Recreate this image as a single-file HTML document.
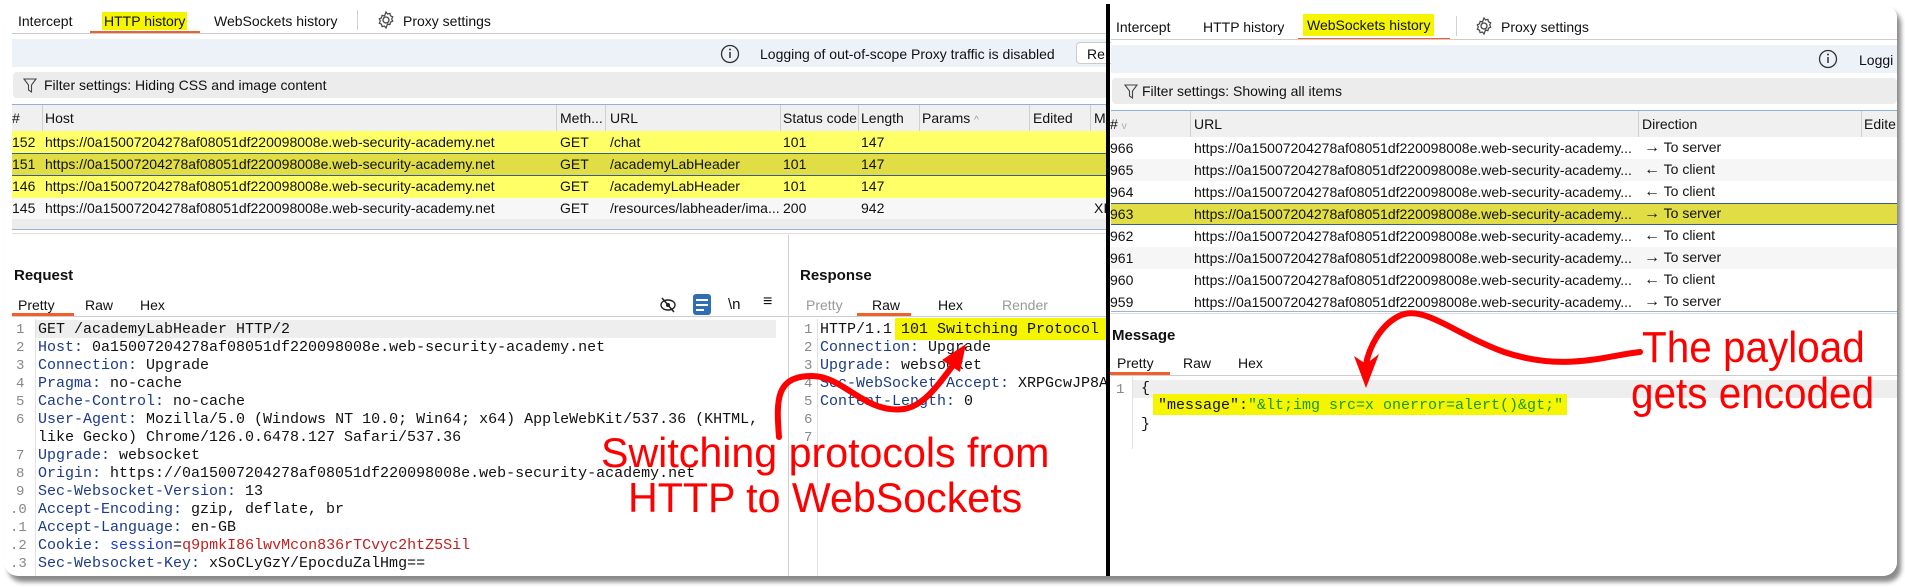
<!DOCTYPE html>
<html><head><meta charset="utf-8">
<style>
*{margin:0;padding:0;box-sizing:border-box}
body{width:1905px;height:587px;background:#fff;position:relative;overflow:hidden;font-family:"Liberation Sans",sans-serif;font-size:14px;color:#111}
.card{position:absolute;left:4px;top:4px;width:1893px;height:572px;background:#fff;border-radius:14px;box-shadow:4px 6px 5px #8a8a8a;overflow:hidden}
.a{position:absolute;white-space:nowrap}
.mono{font-family:"Liberation Mono",monospace;font-size:15px;letter-spacing:0}
.k{color:#1b3a8a}
.ln{color:#888;font-family:"Liberation Mono",monospace;font-size:14px}
.hl{background:#f5f500}
.sep{position:absolute;width:1px;background:#d0d0d0}
.red{color:#f00;font-family:"Liberation Sans",sans-serif;font-size:40px;line-height:40px;transform-origin:0 0}
.dir{font-size:16px}
</style></head><body>
<div class="card">
<div class="a" style="left:14px;top:9px">Intercept</div>
<div class="a hl" style="left:98px;top:8px;padding:1px 2px">HTTP history</div>
<div class="a" style="left:86px;top:27px;width:110px;height:3px;background:#f0602a"></div>
<div class="a" style="left:210px;top:9px">WebSockets history</div>
<div class="sep" style="left:353px;top:6px;height:20px"></div>
<svg class="a" style="left:372px;top:6px" width="20" height="20" viewBox="0 0 20 20"><circle cx="10" cy="10" r="3" fill="none" stroke="#444" stroke-width="1.3"/><path d="M10 2l1.5 2 2.4-.6.6 2.4 2.2 1-1 2.2 1 2.2-2.2 1-.6 2.4-2.4-.6L10 18l-1.5-2-2.4.6-.6-2.4-2.2-1 1-2.2-1-2.2 2.2-1 .6-2.4 2.4.6z" fill="none" stroke="#444" stroke-width="1.2"/></svg>
<div class="a" style="left:399px;top:9px">Proxy settings</div>
<div class="a" style="left:8px;top:29px;width:1096px;height:1px;background:#ccc"></div>

<div class="a" style="left:8px;top:35px;width:1096px;height:28px;background:#edf1f8"></div>
<svg class="a" style="left:716px;top:40px" width="20" height="20"><circle cx="10" cy="10" r="8.5" fill="none" stroke="#333" stroke-width="1.3"/><path d="M10 8v6" stroke="#333" stroke-width="1.5"/><circle cx="10" cy="5.5" r="1" fill="#333"/></svg>
<div class="a" style="left:756px;top:42px">Logging of out-of-scope Proxy traffic is disabled</div>
<div class="a" style="left:1072px;top:38px;width:40px;height:22px;background:#fff;border:1px solid #ccc;border-radius:4px;padding:3px 0 0 10px">Re</div>

<div class="a" style="left:9px;top:68px;width:1095px;height:26px;background:#ececec;border-radius:4px"></div>
<svg class="a" style="left:19px;top:74px" width="14" height="16"><path d="M1 1h12l-4.5 6v7l-3-2V7z" fill="none" stroke="#444" stroke-width="1.1"/></svg>
<div class="a" style="left:40px;top:73px">Filter settings: Hiding CSS and image content</div>

<div class="a" style="left:8px;top:100px;width:1096px;height:1px;background:#8fb0d8"></div>
<div class="a" style="left:8px;top:101px;width:1096px;height:26px;background:#f0f0f0"></div>
<div class="sep" style="left:38px;top:101px;height:26px"></div>
<div class="sep" style="left:552px;top:101px;height:26px"></div>
<div class="sep" style="left:601px;top:101px;height:26px"></div>
<div class="sep" style="left:776px;top:101px;height:26px"></div>
<div class="sep" style="left:854px;top:101px;height:26px"></div>
<div class="sep" style="left:915px;top:101px;height:26px"></div>
<div class="sep" style="left:1025px;top:101px;height:26px"></div>
<div class="sep" style="left:1086px;top:101px;height:26px"></div>
<div class="a" style="left:8px;top:106px">#</div>
<div class="a" style="left:41px;top:106px">Host</div>
<div class="a" style="left:556px;top:106px">Meth...</div>
<div class="a" style="left:606px;top:106px">URL</div>
<div class="a" style="left:779px;top:106px">Status code</div>
<div class="a" style="left:857px;top:106px">Length</div>
<div class="a" style="left:918px;top:106px">Params <span style="color:#999;font-size:10px">^</span></div>
<div class="a" style="left:1029px;top:106px">Edited</div>
<div class="a" style="left:1090px;top:106px">M</div>

<div class="a" style="left:8px;top:127px;width:1096px;height:22px;background:#ffff66"></div>
<div class="a" style="left:8px;top:149px;width:1096px;height:23px;background:#e0de44;border-top:1px solid #3a5a9a;border-bottom:1px solid #3a5a9a"></div>
<div class="a" style="left:8px;top:172px;width:1096px;height:22px;background:#ffff66"></div>
<div class="a" style="left:8px;top:194px;width:1096px;height:21px;background:#f7f7f7"></div>
<div class="a" style="left:8px;top:130px">152</div><div class="a" style="left:41px;top:130px">https://0a15007204278af08051df220098008e.web-security-academy.net</div><div class="a" style="left:556px;top:130px">GET</div><div class="a" style="left:606px;top:130px">/chat</div><div class="a" style="left:779px;top:130px">101</div><div class="a" style="left:857px;top:130px">147</div>
<div class="a" style="left:8px;top:152px">151</div><div class="a" style="left:41px;top:152px">https://0a15007204278af08051df220098008e.web-security-academy.net</div><div class="a" style="left:556px;top:152px">GET</div><div class="a" style="left:606px;top:152px">/academyLabHeader</div><div class="a" style="left:779px;top:152px">101</div><div class="a" style="left:857px;top:152px">147</div>
<div class="a" style="left:8px;top:174px">146</div><div class="a" style="left:41px;top:174px">https://0a15007204278af08051df220098008e.web-security-academy.net</div><div class="a" style="left:556px;top:174px">GET</div><div class="a" style="left:606px;top:174px">/academyLabHeader</div><div class="a" style="left:779px;top:174px">101</div><div class="a" style="left:857px;top:174px">147</div>
<div class="a" style="left:8px;top:196px">145</div><div class="a" style="left:41px;top:196px">https://0a15007204278af08051df220098008e.web-security-academy.net</div><div class="a" style="left:556px;top:196px">GET</div><div class="a" style="left:606px;top:196px">/resources/labheader/ima...</div><div class="a" style="left:779px;top:196px">200</div><div class="a" style="left:857px;top:196px">942</div><div class="a" style="left:1090px;top:196px">XI</div>
<div class="a" style="left:8px;top:215px;width:1096px;height:10px;background:#ececec"></div>
<div class="a" style="left:8px;top:225px;width:1096px;height:1px;background:#9ab4d6"></div>
<div class="a" style="left:8px;top:229px;width:1096px;height:1px;background:#ddd"></div>

<div class="sep" style="left:784px;top:231px;height:342px"></div>
<div class="a" style="left:10px;top:263px;font-weight:bold;font-size:15px">Request</div>
<div class="a" style="left:14px;top:293px">Pretty</div>
<div class="a" style="left:81px;top:293px">Raw</div>
<div class="a" style="left:136px;top:293px">Hex</div>
<div class="a" style="left:8px;top:309px;width:62px;height:3px;background:#f0602a"></div>
<svg class="a" style="left:654px;top:292px" width="20" height="18"><ellipse cx="10" cy="9" rx="7" ry="5" fill="none" stroke="#222" stroke-width="1.4"/><circle cx="10" cy="9" r="2" fill="#222"/><path d="M4 2l12 14" stroke="#222" stroke-width="1.5"/></svg>
<div class="a" style="left:689px;top:290px;width:18px;height:21px;background:#2f6db5;border-radius:3px"></div>
<div class="a" style="left:692px;top:295px;width:12px;height:2px;background:#fff"></div><div class="a" style="left:692px;top:300px;width:12px;height:2px;background:#fff"></div><div class="a" style="left:692px;top:305px;width:8px;height:2px;background:#fff"></div>
<div class="a" style="left:724px;top:292px;font-size:15px">\n</div>
<div class="a" style="left:759px;top:289px;font-size:16px">≡</div>
<div class="a" style="left:8px;top:312px;width:776px;height:1px;background:#ccc"></div>
<div class="a" style="left:31px;top:315px;width:1px;height:258px;background:#e2e2e2"></div>
<div class="a" style="left:32px;top:316px;width:740px;height:18px;background:#eee"></div>
<div class="ln a" style="left:12px;top:318px">1</div><div class="a mono" style="left:34px;top:317px">GET /academyLabHeader HTTP/2</div>
<div class="ln a" style="left:12px;top:336px">2</div><div class="a mono" style="left:34px;top:335px"><span class="k">Host:</span> 0a15007204278af08051df220098008e.web-security-academy.net</div>
<div class="ln a" style="left:12px;top:354px">3</div><div class="a mono" style="left:34px;top:353px"><span class="k">Connection:</span> Upgrade</div>
<div class="ln a" style="left:12px;top:372px">4</div><div class="a mono" style="left:34px;top:371px"><span class="k">Pragma:</span> no-cache</div>
<div class="ln a" style="left:12px;top:390px">5</div><div class="a mono" style="left:34px;top:389px"><span class="k">Cache-Control:</span> no-cache</div>
<div class="ln a" style="left:12px;top:408px">6</div><div class="a mono" style="left:34px;top:407px"><span class="k">User-Agent:</span> Mozilla/5.0 (Windows NT 10.0; Win64; x64) AppleWebKit/537.36 (KHTML,</div>
<div class="a mono" style="left:34px;top:425px">like Gecko) Chrome/126.0.6478.127 Safari/537.36</div>
<div class="ln a" style="left:12px;top:444px">7</div><div class="a mono" style="left:34px;top:443px"><span class="k">Upgrade:</span> websocket</div>
<div class="ln a" style="left:12px;top:462px">8</div><div class="a mono" style="left:34px;top:461px"><span class="k">Origin:</span> https://0a15007204278af08051df220098008e.web-security-academy.net</div>
<div class="ln a" style="left:12px;top:480px">9</div><div class="a mono" style="left:34px;top:479px"><span class="k">Sec-Websocket-Version:</span> 13</div>
<div class="ln a" style="left:6px;top:498px">.0</div><div class="a mono" style="left:34px;top:497px"><span class="k">Accept-Encoding:</span> gzip, deflate, br</div>
<div class="ln a" style="left:6px;top:516px">.1</div><div class="a mono" style="left:34px;top:515px"><span class="k">Accept-Language:</span> en-GB</div>
<div class="ln a" style="left:6px;top:534px">.2</div><div class="a mono" style="left:34px;top:533px"><span class="k">Cookie:</span> <span style="color:#1a3bd0">session</span>=<span style="color:#c02020">q9pmkI86lwvMcon836rTCvyc2htZ5Sil</span></div>
<div class="ln a" style="left:6px;top:552px">.3</div><div class="a mono" style="left:34px;top:551px"><span class="k">Sec-Websocket-Key:</span> xSoCLyGzY/EpocduZalHmg==</div>

<div class="a" style="left:796px;top:263px;font-weight:bold;font-size:15px">Response</div>
<div class="a" style="left:802px;top:293px;color:#999">Pretty</div>
<div class="a" style="left:868px;top:293px">Raw</div>
<div class="a" style="left:934px;top:293px">Hex</div>
<div class="a" style="left:998px;top:293px;color:#999">Render</div>
<div class="a" style="left:853px;top:309px;width:54px;height:3px;background:#f0602a"></div>
<div class="a" style="left:785px;top:312px;width:319px;height:1px;background:#ccc"></div>
<div class="a" style="left:813px;top:315px;width:1px;height:258px;background:#e2e2e2"></div>
<div class="a hl" style="left:891px;top:314px;width:213px;height:22px"></div>
<div class="ln a" style="left:800px;top:318px">1</div><div class="a mono" style="left:816px;top:317px">HTTP/1.1 101 Switching Protocol</div>
<div class="ln a" style="left:800px;top:336px">2</div><div class="a mono" style="left:816px;top:335px"><span class="k">Connection:</span> Upgrade</div>
<div class="ln a" style="left:800px;top:354px">3</div><div class="a mono" style="left:816px;top:353px"><span class="k">Upgrade:</span> websocket</div>
<div class="ln a" style="left:800px;top:372px">4</div><div class="a mono" style="left:816px;top:371px"><span class="k">Sec-WebSocket-Accept:</span> XRPGcwJP8A</div>
<div class="ln a" style="left:800px;top:390px">5</div><div class="a mono" style="left:816px;top:389px"><span class="k">Content-Length:</span> 0</div>
<div class="ln a" style="left:800px;top:408px">6</div>
<div class="ln a" style="left:800px;top:426px">7</div>

<div class="a" style="left:1102px;top:0;width:4px;height:572px;background:#000"></div>

<div class="a" style="left:1107px;top:0;width:786px;height:572px;background:#fff"></div>
<div class="a" style="left:1112px;top:15px">Intercept</div>
<div class="a" style="left:1199px;top:15px">HTTP history</div>
<div class="a hl" style="left:1299px;top:10px;padding:3px 4px">WebSockets history</div>
<div class="a" style="left:1294px;top:34px;width:152px;height:2px;background:#f0602a"></div>
<div class="sep" style="left:1452px;top:12px;height:20px"></div>
<svg class="a" style="left:1470px;top:12px" width="20" height="20" viewBox="0 0 20 20"><circle cx="10" cy="10" r="3" fill="none" stroke="#444" stroke-width="1.3"/><path d="M10 2l1.5 2 2.4-.6.6 2.4 2.2 1-1 2.2 1 2.2-2.2 1-.6 2.4-2.4-.6L10 18l-1.5-2-2.4.6-.6-2.4-2.2-1 1-2.2-1-2.2 2.2-1 .6-2.4 2.4.6z" fill="none" stroke="#444" stroke-width="1.2"/></svg>
<div class="a" style="left:1497px;top:15px">Proxy settings</div>
<div class="a" style="left:1107px;top:35px;width:786px;height:1px;background:#ccc"></div>
<div class="a" style="left:1107px;top:41px;width:786px;height:28px;background:#edf1f8"></div>
<svg class="a" style="left:1814px;top:45px" width="20" height="20"><circle cx="10" cy="10" r="8.5" fill="none" stroke="#333" stroke-width="1.3"/><path d="M10 8v6" stroke="#333" stroke-width="1.5"/><circle cx="10" cy="5.5" r="1" fill="#333"/></svg>
<div class="a" style="left:1855px;top:48px">Loggi</div>
<div class="a" style="left:1108px;top:74px;width:785px;height:26px;background:#ececec;border-radius:4px"></div>
<svg class="a" style="left:1120px;top:80px" width="14" height="16"><path d="M1 1h12l-4.5 6v7l-3-2V7z" fill="none" stroke="#444" stroke-width="1.1"/></svg>
<div class="a" style="left:1138px;top:79px">Filter settings: Showing all items</div>
<div class="a" style="left:1107px;top:106px;width:786px;height:1px;background:#8fb0d8"></div>
<div class="a" style="left:1107px;top:107px;width:786px;height:26px;background:#f0f0f0"></div>
<div class="sep" style="left:1186px;top:107px;height:26px"></div>
<div class="sep" style="left:1634px;top:107px;height:26px"></div>
<div class="sep" style="left:1857px;top:107px;height:26px"></div>
<div class="a" style="left:1106px;top:112px">#  <span style="color:#aaa;font-size:10px">v</span></div>
<div class="a" style="left:1190px;top:112px">URL</div>
<div class="a" style="left:1638px;top:112px">Direction</div>
<div class="a" style="left:1860px;top:112px">Edite</div>
<div class="a" style="left:1107px;top:155px;width:786px;height:22px;background:#f6f6f6"></div>
<div class="a" style="left:1107px;top:243px;width:786px;height:22px;background:#f6f6f6"></div>
<div class="a" style="left:1107px;top:199px;width:786px;height:22px;background:#e0de44;border-top:1px solid #3a5a9a;border-bottom:1px solid #3a5a9a"></div>
<div class="a" style="left:1106px;top:136px">966</div><div class="a" style="left:1190px;top:136px">https://0a15007204278af08051df220098008e.web-security-academy...</div><div class="a" style="left:1640px;top:135px"><span class="dir">→</span> To server</div>
<div class="a" style="left:1106px;top:158px">965</div><div class="a" style="left:1190px;top:158px">https://0a15007204278af08051df220098008e.web-security-academy...</div><div class="a" style="left:1640px;top:157px"><span class="dir">←</span> To client</div>
<div class="a" style="left:1106px;top:180px">964</div><div class="a" style="left:1190px;top:180px">https://0a15007204278af08051df220098008e.web-security-academy...</div><div class="a" style="left:1640px;top:179px"><span class="dir">←</span> To client</div>
<div class="a" style="left:1106px;top:202px">963</div><div class="a" style="left:1190px;top:202px">https://0a15007204278af08051df220098008e.web-security-academy...</div><div class="a" style="left:1640px;top:201px"><span class="dir">→</span> To server</div>
<div class="a" style="left:1106px;top:224px">962</div><div class="a" style="left:1190px;top:224px">https://0a15007204278af08051df220098008e.web-security-academy...</div><div class="a" style="left:1640px;top:223px"><span class="dir">←</span> To client</div>
<div class="a" style="left:1106px;top:246px">961</div><div class="a" style="left:1190px;top:246px">https://0a15007204278af08051df220098008e.web-security-academy...</div><div class="a" style="left:1640px;top:245px"><span class="dir">→</span> To server</div>
<div class="a" style="left:1106px;top:268px">960</div><div class="a" style="left:1190px;top:268px">https://0a15007204278af08051df220098008e.web-security-academy...</div><div class="a" style="left:1640px;top:267px"><span class="dir">←</span> To client</div>
<div class="a" style="left:1106px;top:290px">959</div><div class="a" style="left:1190px;top:290px">https://0a15007204278af08051df220098008e.web-security-academy...</div><div class="a" style="left:1640px;top:289px"><span class="dir">→</span> To server</div>
<div class="a" style="left:1107px;top:307px;width:786px;height:1px;background:#9ab4d6"></div>
<div class="a" style="left:1107px;top:309px;width:786px;height:1px;background:#ddd"></div>
<div class="a" style="left:1108px;top:323px;font-weight:bold;font-size:15px">Message</div>
<div class="a" style="left:1113px;top:351px">Pretty</div>
<div class="a" style="left:1179px;top:351px">Raw</div>
<div class="a" style="left:1234px;top:351px">Hex</div>
<div class="a" style="left:1106px;top:368px;width:60px;height:3px;background:#f0602a"></div>
<div class="a" style="left:1107px;top:371px;width:786px;height:1px;background:#ccc"></div>
<div class="a" style="left:1128px;top:373px;width:1px;height:72px;background:#e2e2e2"></div>
<div class="a" style="left:1129px;top:376px;width:764px;height:18px;background:#eee"></div>
<div class="ln a" style="left:1112px;top:378px">1</div><div class="a mono" style="left:1137px;top:376px">{</div>
<div class="a hl" style="left:1149px;top:390px;width:414px;height:21px"></div>
<div class="a mono" style="left:1154px;top:393px">"message":<span style="color:#1a9a1a">"&amp;lt;img src=x onerror=alert()&amp;gt;"</span></div>
<div class="a mono" style="left:1137px;top:412px">}</div>

<div class="a red" style="left:597px;top:429px;font-size:42px;transform:scaleX(0.98)">Switching protocols from</div>
<div class="a red" style="left:624px;top:474px;font-size:42px;transform:scaleX(0.98)">HTTP to WebSockets</div>
<div class="a red" style="left:1638px;top:324px;font-size:44px;transform:scaleX(0.92)">The payload</div>
<div class="a red" style="left:1627px;top:370px;font-size:44px;transform:scaleX(0.92)">gets encoded</div>
<svg class="a" style="left:0;top:0" width="1893" height="572">
<path d="M775 433 C772 395 772 372 808 372 C840 372 860 410 900 405 C920 402 935 380 950 360" fill="none" stroke="#f00" stroke-width="6" stroke-linecap="round"/>
<path d="M962 340 L938 356 L956 368 Z" fill="#f00"/>
<path d="M1636 348 C1600 352 1560 368 1500 348 C1450 330 1420 300 1395 312 C1375 322 1365 345 1362 360" fill="none" stroke="#f00" stroke-width="6" stroke-linecap="round"/>
<path d="M1350 352 L1362 384 L1375 350 L1362 360 Z" fill="#f00"/>
</svg>
</div>
</body></html>
